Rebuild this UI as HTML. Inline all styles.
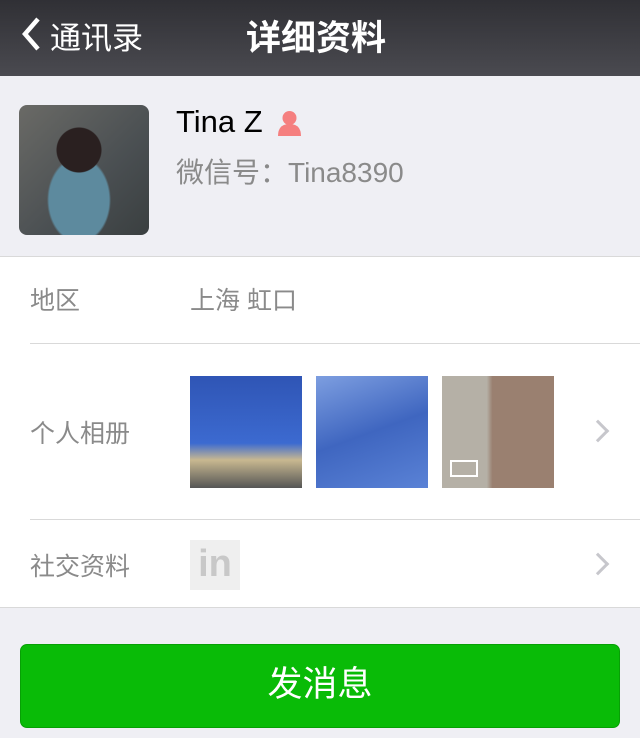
<!DOCTYPE html>
<html><head><meta charset="utf-8"><style>
*{margin:0;padding:0;box-sizing:border-box}
body{width:640px;height:738px;background:#efeff4;font-family:"Liberation Sans","Noto Sans CJK SC",sans-serif;position:relative;overflow:hidden}
.nav{position:absolute;left:0;top:0;width:640px;height:76px;background:linear-gradient(#303035,#4a4a50);color:#fff}
.abs{position:absolute}
.white{position:absolute;left:0;top:256px;width:640px;height:352px;background:#fff;border-top:1px solid #d9d9d9;border-bottom:1px solid #d9d9d9}
.lbl{position:absolute;left:30px;font-size:25px;color:#8a8a8a}
.sep{position:absolute;left:30px;right:0;height:1px;background:#d9d9d9}
.chev{position:absolute;left:592px;width:16px;height:16px;border-right:3px solid #c7c7cc;border-top:3px solid #c7c7cc;transform:rotate(45deg)}
</style></head><body>
<div class="nav">
<svg class="abs" style="left:20px;top:16px" width="24" height="36"><path d="M18 3 L5 18 L18 33" stroke="#fff" stroke-width="4.5" fill="none"/></svg>
<div class="abs" style="left:50px;top:13px;font-size:31px">通讯录</div>
<div class="abs" style="left:246px;top:10px;font-size:35px;font-weight:bold">详细资料</div>
</div>
<div class="abs" style="left:19px;top:105px;width:130px;height:130px;border-radius:8px;background:radial-gradient(circle at 60px 45px,#2a2020 0 22px,transparent 23px),radial-gradient(ellipse at 60px 95px,#5d8a9e 0 30px,transparent 32px),linear-gradient(135deg,#6a6a66,#4a4f52 60%,#3a3f40)"></div>
<div class="abs" style="left:176px;top:104px;font-size:31px;color:#000">Tina Z</div>
<svg class="abs" style="left:276px;top:108px" width="27" height="28"><circle cx="13.5" cy="10" r="7" fill="#f57f7f"/><path d="M2 28 Q2 16 13.5 16 Q25 16 25 28Z" fill="#f57f7f"/></svg>
<div class="abs" style="left:176px;top:151px;font-size:28px;color:#8a8a8a">微信号：Tina8390</div>
<div class="white">
<div class="lbl" style="top:24px">地区</div>
<div class="abs" style="left:190px;top:24px;font-size:25px;color:#8a8a8a">上海 虹口</div>
<div class="sep" style="top:86px"></div>
<div class="lbl" style="top:157px">个人相册</div>
<div class="abs" style="left:190px;top:119px;width:112px;height:112px;background:linear-gradient(#2f55b5 0,#3c6ad0 60%,#c8b890 75%,#555 100%)"></div>
<div class="abs" style="left:316px;top:119px;width:112px;height:112px;background:linear-gradient(160deg,#7d9ee0,#3f66c0 50%,#5a82d6)"></div>
<div class="abs" style="left:442px;top:119px;width:112px;height:112px;background:linear-gradient(90deg,#b5b0a6 0 40%,#9a8070 45% 100%)"></div>
<div class="abs" style="left:450px;top:203px;width:28px;height:17px;border:2px solid #fff"></div>
<div class="chev" style="top:166px;left:590px"></div>
<div class="sep" style="top:262px"></div>
<div class="lbl" style="top:290px">社交资料</div>
<div class="abs" style="left:190px;top:283px;width:50px;height:50px;background:#efefef;color:#c8c8c8;font-weight:bold;font-size:38px;text-align:center;line-height:48px">in</div>
<div class="chev" style="top:299px;left:590px"></div>
</div>
<div class="abs" style="left:20px;top:644px;width:600px;height:84px;background:#09bb07;border-radius:7px;border:1px solid #07a005;color:#fff;font-size:35px;text-align:center;line-height:80px">发消息</div>
</body></html>
